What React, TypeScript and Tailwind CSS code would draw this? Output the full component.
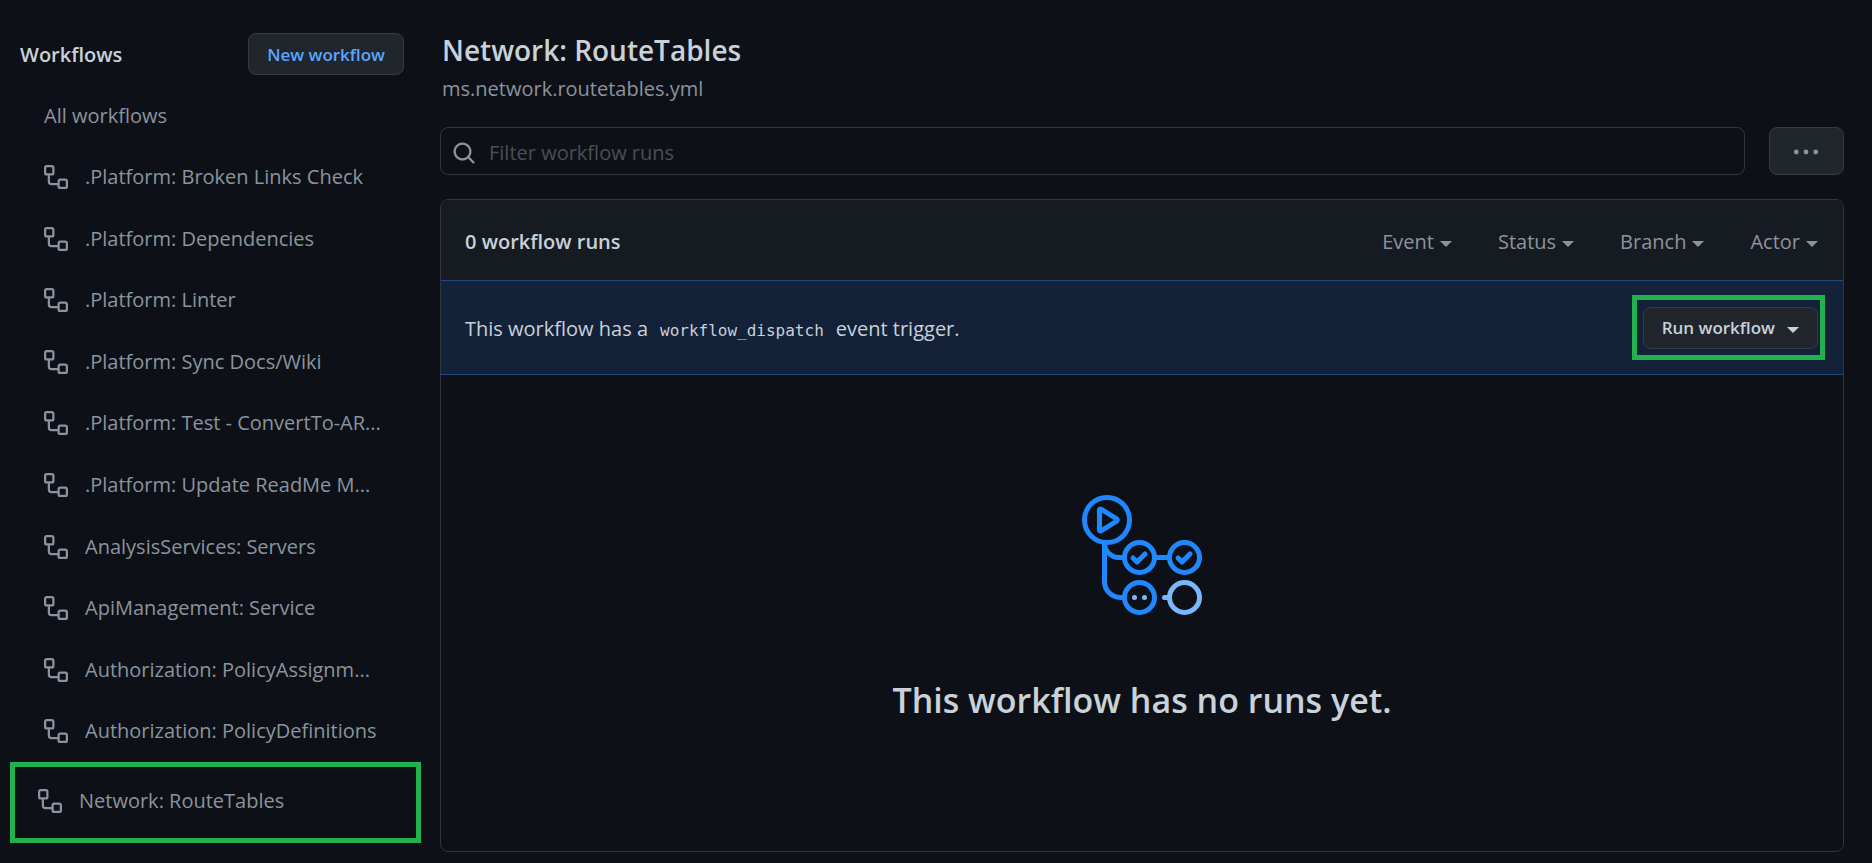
import React from "react";

const workflows: string[] = [
  ".Platform: Broken Links Check",
  ".Platform: Dependencies",
  ".Platform: Linter",
  ".Platform: Sync Docs/Wiki",
  ".Platform: Test - ConvertTo-AR...",
  ".Platform: Update ReadMe M...",
  "AnalysisServices: Servers",
  "ApiManagement: Service",
  "Authorization: PolicyAssignm...",
  "Authorization: PolicyDefinitions",
];

const filters: string[] = ["Event", "Status", "Branch", "Actor"];

function WorkflowIcon() {
  return (
    <svg viewBox="0 0 16 16" className="size-6 shrink-0 fill-current" aria-hidden="true">
      <path
        fillRule="evenodd"
        d="M0 1.75C0 .784.784 0 1.75 0h3.5C6.216 0 7 .784 7 1.75v3.5A1.75 1.75 0 0 1 5.25 7H4v4a1 1 0 0 0 1 1h4v-1.25C9 9.784 9.784 9 10.75 9h3.5c.966 0 1.75.784 1.75 1.75v3.5A1.75 1.75 0 0 1 14.25 16h-3.5A1.75 1.75 0 0 1 9 14.25v-.75H5A2.5 2.5 0 0 1 2.5 11V7h-.75A1.75 1.75 0 0 1 0 5.25Zm1.75-.25a.25.25 0 0 0-.25.25v3.5c0 .138.112.25.25.25h3.5a.25.25 0 0 0 .25-.25v-3.5a.25.25 0 0 0-.25-.25Zm9 9a.25.25 0 0 0-.25.25v3.5c0 .138.112.25.25.25h3.5a.25.25 0 0 0 .25-.25v-3.5a.25.25 0 0 0-.25-.25Z"
      />
    </svg>
  );
}

function SearchIcon() {
  return (
    <svg viewBox="0 0 16 16" className="size-6 shrink-0 fill-[#8b949e]" aria-hidden="true">
      <path
        fillRule="evenodd"
        d="M11.5 7a4.499 4.499 0 11-8.998 0A4.499 4.499 0 0111.5 7zm-.82 4.74a6 6 0 111.06-1.06l3.04 3.04a.75.75 0 11-1.06 1.06l-3.04-3.04z"
      />
    </svg>
  );
}

function Caret() {
  return (
    <svg viewBox="0 0 12 6" className="mt-[3px] h-[6px] w-3 shrink-0 fill-current" aria-hidden="true">
      <path d="M0 0h12L6 6z" />
    </svg>
  );
}

function ActionsIcon() {
  return (
    <svg viewBox="0 0 120 120" className="size-[120px]" fill="none" strokeWidth="5" aria-hidden="true">
      <g stroke="#1f88ff">
        <circle cx="25" cy="25" r="22.5" />
        <path strokeLinejoin="round" d="M17.500 14.800v20.400q.3 1.300 1.500.6L34.700 26.200q1.200-1.200 0-2.400L19 14.200q-1.200-.7-1.500.6z" />
        <path d="M22.500 48v38.500a16 16 0 0 0 16 16h3M22.500 48a14.500 14.500 0 0 0 14.500 14.500h5" />
        <circle cx="57.500" cy="62.500" r="15" />
        <circle cx="102.500" cy="62.500" r="15" />
        <circle cx="57.500" cy="102.500" r="15" />
        <path d="M74 62.500h12" />
        <path strokeLinecap="round" strokeLinejoin="round" d="M51 63l4 4 8-8M96 63l4 4 8-8" />
      </g>
      <g stroke="#79b8ff">
        <circle cx="102.500" cy="102.500" r="15" />
        <path strokeLinecap="round" d="M82.500 102.500h3" />
      </g>
      <g fill="#79b8ff">
        <circle cx="52.500" cy="102.500" r="2.500" />
        <circle cx="62.500" cy="102.500" r="2.500" />
      </g>
    </svg>
  );
}

export default function App() {
  return (
    <div className="flex min-h-screen bg-[#0d1117] font-['Open_Sans','Noto_Sans',sans-serif] text-xl text-[#c9d1d9]">
      <aside className="w-[422px] shrink-0 pl-[10px] pt-[33px]">
        <div className="flex items-center justify-between pl-[10px] pr-[18px]">
          <h2 className="pt-[2px] text-xl font-semibold">Workflows</h2>
          <button
            type="button"
            className="h-[42px] rounded-lg border border-[#363b42] bg-[#21262d] px-[18px] pt-px text-[17px] font-semibold text-[#58a6ff]"
          >
            New workflow
          </button>
        </div>
        <nav aria-label="Workflows" className="mt-[10px] text-[#8b949e]">
          <ul className="grid min-h-[677px] auto-rows-fr pl-[34px]">
            <li className="flex items-center">
              <a href="#all">All workflows</a>
            </li>
            {workflows.map((name) => (
              <li key={name} className="flex items-center">
                <a href="#workflow" className="flex items-center gap-[17px] whitespace-nowrap">
                  <WorkflowIcon />
                  {name}
                </a>
              </li>
            ))}
          </ul>
          <a
            href="#routetables"
            className="mr-px flex h-[81px] items-center gap-[17px] border-[5px] border-[#22b14c] pb-[3px] pl-[23px]"
          >
            <WorkflowIcon />
            Network: RouteTables
          </a>
        </nav>
      </aside>

      <main className="flex min-w-0 flex-1 flex-col pb-[11px] pl-[18px] pr-7 pt-[30px]">
        <header className="pl-[2px]">
          <h1 className="text-[28px] font-semibold leading-10">Network: RouteTables</h1>
          <p className="leading-[38px] text-[#8b949e]">ms.network.routetables.yml</p>
        </header>

        <div className="mt-[19px] flex gap-6">
          <label className="flex h-12 flex-1 items-center gap-[13px] rounded-lg border border-[#30363d] px-[11px] pt-[3px]">
            <SearchIcon />
            <input
              type="text"
              aria-label="Filter workflow runs"
              placeholder="Filter workflow runs"
              className="min-w-0 flex-1 bg-transparent outline-none placeholder:text-[#484f58]"
            />
          </label>
          <button
            type="button"
            aria-label="Show options"
            className="flex h-12 w-[75px] items-center justify-center rounded-lg border border-[#363b42] bg-[#21262d] pr-[2px] pt-[2px]"
          >
            <svg viewBox="0 0 26 6" className="h-[6px] w-[26px] fill-[#8b949e]" aria-hidden="true">
              <circle cx="3.300" cy="3" r="2.400" />
              <circle cx="13" cy="3" r="2.400" />
              <circle cx="22.700" cy="3" r="2.400" />
            </svg>
          </button>
        </div>

        <section className="mt-6 flex flex-1 flex-col overflow-hidden rounded-lg border border-[#30363d]">
          <div className="flex h-20 items-center justify-between bg-[#161b22] pl-6 pr-[25px] pt-1">
            <h2 className="font-semibold">0 workflow runs</h2>
            <div className="flex gap-[46px] text-[#8b949e]">
              {filters.map((label) => (
                <button key={label} type="button" className="flex items-center gap-[6px]">
                  {label}
                  <Caret />
                </button>
              ))}
            </div>
          </div>
          <div className="flex h-[95px] items-center justify-between border-y border-[#1d4a86] bg-[#132238] pl-6 pr-[18px]">
            <p className="pt-[2px]">
              This workflow has a
              <code className="mx-3 font-['DejaVu_Sans_Mono',monospace] text-base">workflow_dispatch</code>
              event trigger.
            </p>
            <div className="border-[5px] border-[#22b14c] pb-[6px] pl-[6px] pr-[2px] pt-[7px]">
              <button
                type="button"
                className="flex h-[42px] items-center gap-3 rounded-lg border border-[#363b42] bg-[#21262d] px-[18px] text-[17px] font-semibold"
              >
                Run workflow
                <Caret />
              </button>
            </div>
          </div>
          <div className="flex flex-1 flex-col items-center pt-[120px]">
            <ActionsIcon />
            <p className="mt-[60px] text-[34px] font-semibold leading-[50px]">This workflow has no runs yet.</p>
          </div>
        </section>
      </main>
    </div>
  );
}
